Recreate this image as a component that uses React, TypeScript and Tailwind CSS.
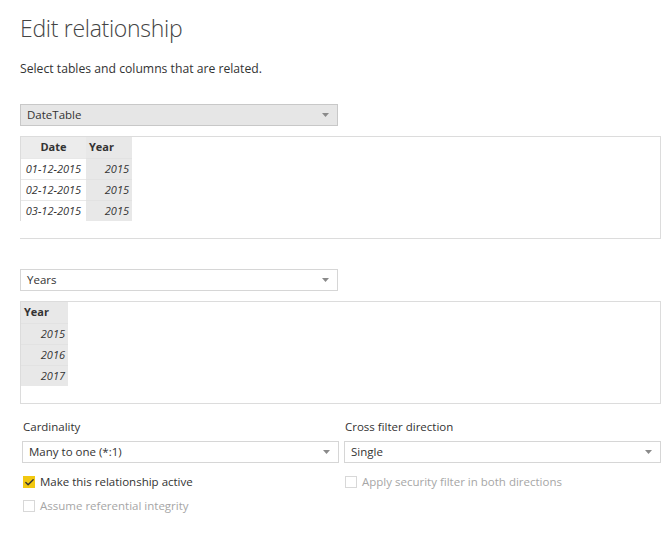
import { Check } from "lucide-react";

const font = { fontFamily: '"Open Sans", "Noto Sans", sans-serif' };

function Caret() {
  return (
    <svg width="7" height="4" viewBox="0 0 7 4" className="shrink-0">
      <path d="M0 0h7L3.5 4z" fill="#8a8a8a" />
    </svg>
  );
}

function Dropdown({ label, gray, className = "" }: { label: string; gray?: boolean; className?: string }) {
  return (
    <div
      className={`flex h-[22px] items-center justify-between border pl-[6px] pr-[8px] text-[11.5px] text-[#333] ${
        gray ? "border-[#c8c8c8] bg-[#e6e6e6]" : "border-[#d6d6d6] bg-white"
      } ${className}`}
    >
      <span>{label}</span>
      <Caret />
    </div>
  );
}

function Checkbox({ checked, label, disabled }: { checked?: boolean; label: string; disabled?: boolean }) {
  return (
    <div className="flex h-[24px] items-center gap-[5px] text-[11.5px]">
      {checked ? (
        <div className="flex h-[12px] w-[12px] items-center justify-center bg-[#f2c811]">
          <Check size={11} strokeWidth={3} color="#333" />
        </div>
      ) : (
        <div className="h-[12px] w-[12px] border border-[#d8d8d8] bg-white" />
      )}
      <span className={disabled ? "text-[#a6a6a6]" : "text-[#333]"}>{label}</span>
    </div>
  );
}

function DateTablePreview() {
  const rows = ["01-12-2015", "02-12-2015", "03-12-2015"];
  return (
    <div className="mt-[10px] h-[103px] border border-[#dcdcdc] border-l-0 bg-white">
      <div className="flex text-[11px] text-[#333]">
        <div className="flex w-[66px] flex-col border-l border-[#dcdcdc]">
          <div className="flex h-[21px] items-center justify-center bg-[#ececec] font-bold">Date</div>
          {rows.map((r) => (
            <div key={r} className="flex h-[21px] items-center justify-center border-t border-[#e8e8e8] italic">
              {r}
            </div>
          ))}
        </div>
        <div className="flex w-[46px] flex-col bg-[#e8e8e8]">
          <div className="flex h-[21px] items-center pl-[3px] font-bold">Year</div>
          {rows.map((r) => (
            <div key={r} className="flex h-[21px] items-center justify-end border-t border-[#e2e2e2] pr-[3px] italic">
              2015
            </div>
          ))}
        </div>
      </div>
    </div>
  );
}

function YearsPreview() {
  return (
    <div className="mt-[10px] h-[103px] border border-[#dcdcdc] bg-white">
      <div className="flex w-[47px] flex-col bg-[#e8e8e8] text-[11px] text-[#333]">
        <div className="flex h-[21px] items-center pl-[3px] font-bold">Year</div>
        {["2015", "2016", "2017"].map((y) => (
          <div key={y} className="flex h-[21px] items-center justify-end border-t border-[#e2e2e2] pr-[3px] italic">
            {y}
          </div>
        ))}
      </div>
    </div>
  );
}

export default function App() {
  return (
    <div className="h-[533px] w-[669px] overflow-hidden bg-white pl-[20px] pr-[8px]" style={font}>
      <h1 className="pt-[12px] text-[23px] font-light leading-[32px] tracking-[-0.3px] text-[#444]">
        Edit relationship
      </h1>
      <p className="mt-[16px] text-[12.2px] leading-[18px] text-[#333]">Select tables and columns that are related.</p>

      <Dropdown label="DateTable" gray className="mt-[26px] w-[318px]" />
      <DateTablePreview />

      <Dropdown label="Years" className="mt-[30px] w-[318px]" />
      <YearsPreview />

      <div className="mt-[14px] grid grid-cols-2 gap-x-[5px] pl-[2px]">
        <div>
          <div className="mb-[6px] pl-[1px] text-[11.5px] leading-[17px] text-[#333]">Cardinality</div>
          <Dropdown label="Many to one (*:1)" />
        </div>
        <div>
          <div className="mb-[6px] pl-[1px] text-[11.5px] leading-[17px] text-[#333]">Cross filter direction</div>
          <Dropdown label="Single" />
        </div>
        <div className="mt-[7px] pl-[1px]">
          <Checkbox checked label="Make this relationship active" />
          <Checkbox disabled label="Assume referential integrity" />
        </div>
        <div className="mt-[7px] pl-[1px]">
          <Checkbox disabled label="Apply security filter in both directions" />
        </div>
      </div>
    </div>
  );
}
